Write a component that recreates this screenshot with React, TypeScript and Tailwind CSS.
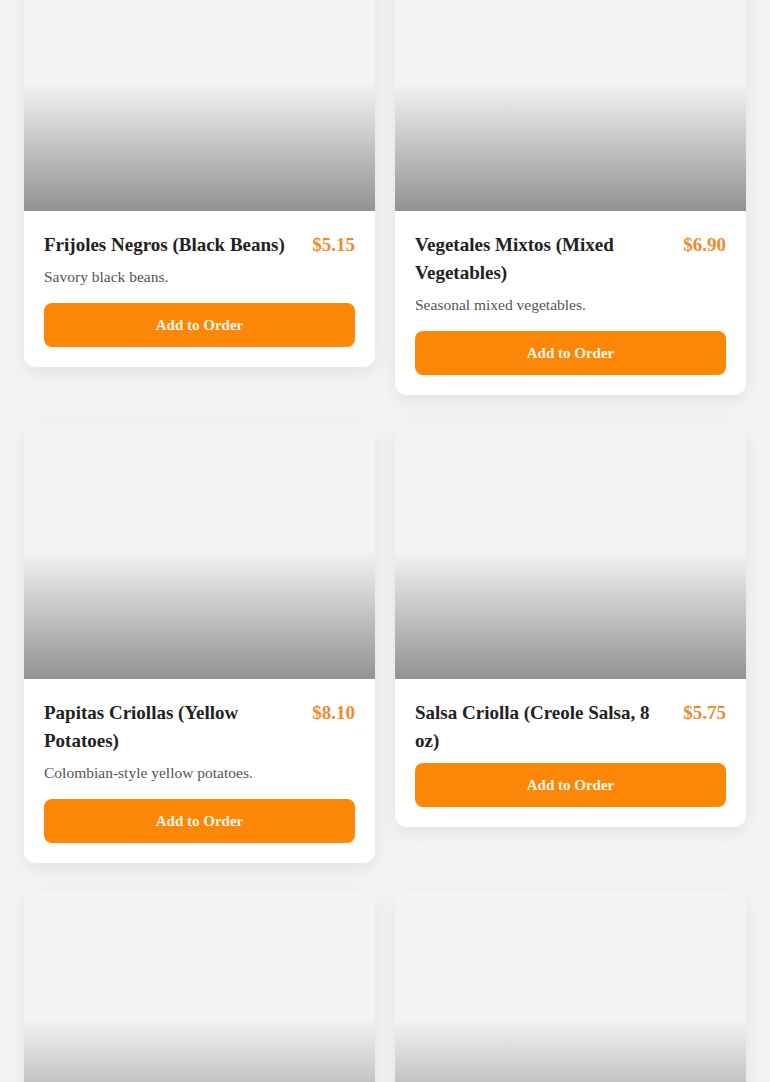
import React from 'react';

interface MenuItem {
  name: string;
  price: string;
  description?: string;
}

const items: MenuItem[] = [
  { name: 'Frijoles Negros (Black Beans)', price: '$5.15', description: 'Savory black beans.' },
  { name: 'Vegetales Mixtos (Mixed Vegetables)', price: '$6.90', description: 'Seasonal mixed vegetables.' },
  { name: 'Papitas Criollas (Yellow Potatoes)', price: '$8.10', description: 'Colombian-style yellow potatoes.' },
  { name: 'Salsa Criolla (Creole Salsa, 8 oz)', price: '$5.75' },
];

const ImagePlaceholder = () => (
  <div className="relative h-64 bg-[#f3f3f3]">
    <div className="absolute inset-x-0 bottom-0 h-1/2 bg-gradient-to-t from-black/40 to-transparent" />
  </div>
);

const MenuCard: React.FC<{ item?: MenuItem }> = ({ item }) => (
  <div className="bg-white rounded-xl overflow-hidden shadow-[0_6px_20px_rgba(0,0,0,0.08)]">
    <ImagePlaceholder />

    {item && (
      <div className="p-5">
        <div className="flex items-start justify-between gap-4 mb-2">
          <h3 className="text-[19px] leading-7 font-bold text-[#222]">{item.name}</h3>
          <span className="text-[19px] leading-7 font-bold text-[#f08a2a]">{item.price}</span>
        </div>
        {item.description && (
          <p className="text-[15.5px] leading-5 text-[#555] mb-4">{item.description}</p>
        )}
        <button className="w-full h-11 rounded-lg bg-[#fb8607] text-[#fff8ea] text-[15px] font-bold">
          Add to Order
        </button>
      </div>
    )}
  </div>
);

export default function App() {
  return (
    <div
      className="h-[1082px] overflow-hidden bg-[#f4f4f4]"
      style={{ fontFamily: '"Liberation Serif", "DejaVu Serif", serif' }}
    >
      <div className="grid grid-cols-2 gap-x-5 gap-y-7 px-6 items-start -mt-[45px]">
        {items.map((item) => (
          <MenuCard key={item.name} item={item} />
        ))}
        {/* next row, scrolled below the fold */}
        <MenuCard />
        <MenuCard />
      </div>
    </div>
  );
}
